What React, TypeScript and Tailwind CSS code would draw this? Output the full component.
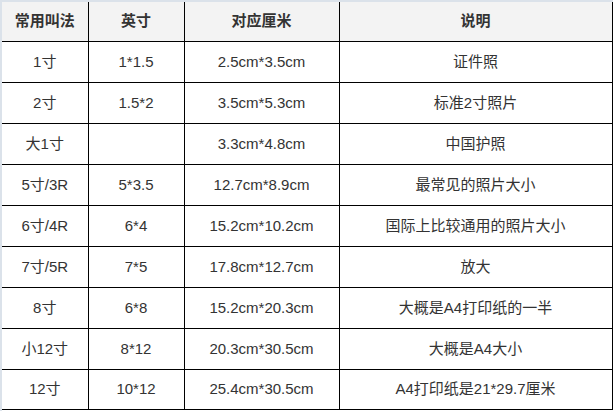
import React from 'react';

interface SizeRow {
  name: string;
  inch: string;
  cm: string;
  note: string;
}

const rows: SizeRow[] = [
  { name: '1寸', inch: '1*1.5', cm: '2.5cm*3.5cm', note: '证件照' },
  { name: '2寸', inch: '1.5*2', cm: '3.5cm*5.3cm', note: '标准2寸照片' },
  { name: '大1寸', inch: '', cm: '3.3cm*4.8cm', note: '中国护照' },
  { name: '5寸/3R', inch: '5*3.5', cm: '12.7cm*8.9cm', note: '最常见的照片大小' },
  { name: '6寸/4R', inch: '6*4', cm: '15.2cm*10.2cm', note: '国际上比较通用的照片大小' },
  { name: '7寸/5R', inch: '7*5', cm: '17.8cm*12.7cm', note: '放大' },
  { name: '8寸', inch: '6*8', cm: '15.2cm*20.3cm', note: '大概是A4打印纸的一半' },
  { name: '小12寸', inch: '8*12', cm: '20.3cm*30.5cm', note: '大概是A4大小' },
  { name: '12寸', inch: '10*12', cm: '25.4cm*30.5cm', note: 'A4打印纸是21*29.7厘米' },
];

export default function App() {
  return (
    <div
      className="w-[613px] h-[411px] bg-white border-l-2 border-t-2 border-[#dbe2ea] overflow-hidden"
      style={{ fontFamily: '"Liberation Sans", "Noto Sans CJK SC", sans-serif' }}
    >
      <table className="table-fixed border-collapse w-[610px] text-[15px] leading-[18px] text-[#333]">
        <colgroup>
          <col className="w-[86px]" />
          <col className="w-[96px]" />
          <col className="w-[155px]" />
          <col className="w-[273px]" />
        </colgroup>
        <thead>
          <tr className="bg-[#f3f3f3]">
            <th className="h-[39px] border-r border-b border-black font-bold text-center p-0">常用叫法</th>
            <th className="border-r border-b border-black font-bold text-center p-0">英寸</th>
            <th className="border-r border-b border-black font-bold text-center p-0">对应厘米</th>
            <th className="border-r border-b border-black font-bold text-center p-0">说明</th>
          </tr>
        </thead>
        <tbody>
          {rows.map((r, i) => (
            <tr key={r.name}>
              <td className={`${i === rows.length - 1 ? 'h-[40px]' : 'h-[41px]'} border-r border-b border-black text-center p-0`}>{r.name}</td>
              <td className="border-r border-b border-black text-center p-0">{r.inch}</td>
              <td className="border-r border-b border-black text-center p-0">{r.cm}</td>
              <td className="border-r border-b border-black text-center p-0">{r.note}</td>
            </tr>
          ))}
        </tbody>
      </table>
    </div>
  );
}
